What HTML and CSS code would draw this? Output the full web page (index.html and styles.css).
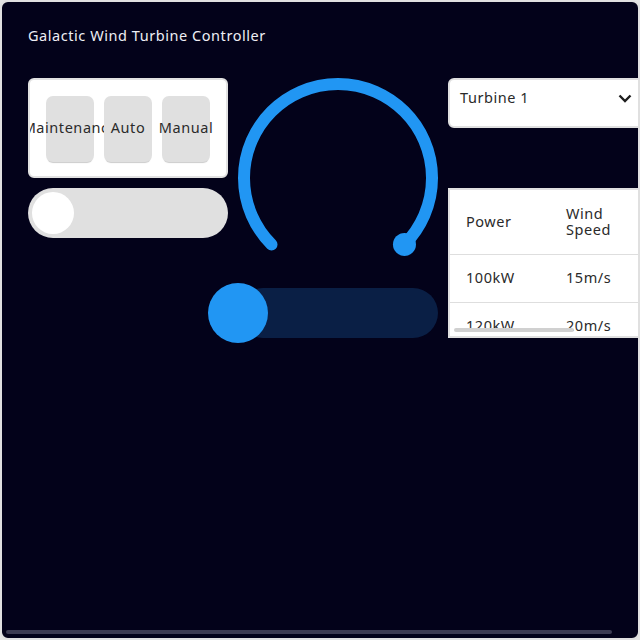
FILE: index.html
```html
<!DOCTYPE html>
<html>
<head>
<meta charset="utf-8">
<link rel="stylesheet" href="styles.css">
</head>
<body>
<div class="screen">
  <div class="title">Galactic Wind Turbine Controller</div>
  <div class="grid">
    <div class="col">
      <div class="btnm">
        <div class="btn"><span>Maintenance</span></div>
        <div class="btn"><span>Auto</span></div>
        <div class="btn"><span>Manual</span></div>
      </div>
      <div class="switch"><div class="switch-knob"></div></div>
    </div>
    <div class="col">
      <svg class="arc" width="200" height="200" viewBox="0 0 200 200">
        <path d="M33.53 166.47 A94 94 0 1 1 166.47 166.47" fill="none" stroke="#2196f3" stroke-width="12" stroke-linecap="round"/>
        <circle cx="166.47" cy="166.47" r="11.5" fill="#2196f3"/>
      </svg>
      <div class="slider"><div class="slider-knob"></div></div>
    </div>
    <div class="col col3">
      <div class="dropdown">
        <span>Turbine 1</span>
        <svg class="chev" width="14" height="9" viewBox="0 0 14 9"><polyline points="1.5,1.5 7,7 12.5,1.5" fill="none" stroke="#1e1e1e" stroke-width="2.4" stroke-linejoin="miter"/></svg>
      </div>
      <div class="table">
        <div class="row head">
          <div class="cell">Power</div>
          <div class="cell">Wind Speed</div>
        </div>
        <div class="row">
          <div class="cell">100kW</div>
          <div class="cell">15m/s</div>
        </div>
        <div class="row">
          <div class="cell">120kW</div>
          <div class="cell">20m/s</div>
        </div>
        <div class="table-scroll"></div>
      </div>
    </div>
  </div>
  <div class="screen-scroll"></div>
</div>
</body>
</html>
```
FILE: styles.css
```css
* { box-sizing: border-box; }
html, body { margin: 0; padding: 0; background: #e4e4e4; }
body {
  font-family: "Noto Sans", "Open Sans", sans-serif;
  font-size: 14.5px;
  letter-spacing: 0.55px;
}

.screen {
  position: relative;
  width: 640px;
  height: 640px;
  border: 2px solid #e0e0e0;
  border-radius: 8px;
  background: #03021a;
  overflow: hidden;
  padding: 25px 26px 26px 26px;
}

.title {
  color: #eeeef4;
  line-height: 16px;
  height: 16px;
}

.grid {
  margin-top: 35px;
  display: flex;
  gap: 10px;
}

.col {
  display: flex;
  flex-direction: column;
  gap: 10px;
  width: 200px;
  flex: none;
}

.col3 { gap: 60px; }

.btnm {
  width: 200px;
  height: 100px;
  background: #ffffff;
  border: 2px solid #e2e2e2;
  border-radius: 6px;
  padding: 16px 16px 14px 16px;
  display: flex;
  gap: 10px;
  overflow: hidden;
}

.btn {
  width: 48px;
  height: 66px;
  flex: none;
  background: #e0e0e0;
  border-radius: 7px;
  box-shadow: 0 2px 1px -1px #cbcbcb;
  display: flex;
  align-items: center;
  justify-content: center;
  color: #2b2b2b;
  white-space: nowrap;
  padding-bottom: 4px;
}

.switch {
  position: relative;
  width: 200px;
  height: 50px;
  border-radius: 25px;
  background: #e0e0e0;
  padding: 4px;
}

.switch-knob {
  width: 42px;
  height: 42px;
  border-radius: 50%;
  background: #ffffff;
}

.arc { display: block; }

.slider {
  position: relative;
  width: 200px;
  height: 50px;
  border-radius: 25px;
  background: #0a1f45;
}

.slider-knob {
  position: absolute;
  left: -30px;
  top: -5px;
  width: 60px;
  height: 60px;
  border-radius: 50%;
  background: #2196f3;
}

.dropdown {
  width: 200px;
  height: 50px;
  background: #ffffff;
  border: 2px solid #e0e0e0;
  border-radius: 6px;
  display: flex;
  align-items: center;
  justify-content: space-between;
  padding: 0 14px 12px 10px;
  color: #2a2a2a;
}

.chev { display: block; margin-top: 2px; }

.table {
  position: relative;
  width: 200px;
  height: 150px;
  background: #ffffff;
  border: 2px solid #e0e0e0;
  border-right: none;
  overflow: hidden;
}

.row {
  display: flex;
  border-bottom: 1px solid #dedede;
}

.cell {
  width: 100px;
  flex: none;
  padding: 14px 16px 16px 16px;
  line-height: 16px;
  color: #2a2a2a;
}

.head .cell { padding-right: 24px; display: flex; align-items: center; }
.head { height: 65px; }
.row:not(.head) { height: 48px; }

.table-scroll {
  position: absolute;
  left: 4px;
  top: 138px;
  width: 120px;
  height: 4px;
  border-radius: 2px;
  background: #d0d0d0;
}

.screen-scroll {
  position: absolute;
  left: 4px;
  bottom: 4px;
  width: 606px;
  height: 4px;
  border-radius: 2px;
  background: #3c3b52;
}
```
